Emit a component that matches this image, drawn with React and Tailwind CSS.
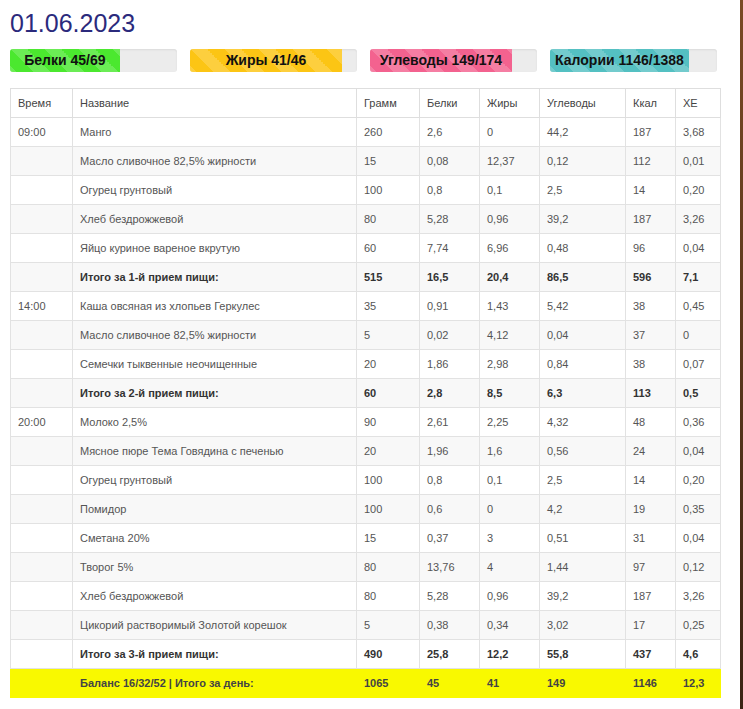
const bars = [
  { label: 'Белки 45/69', pct: 109 / 166, color: 'bg-[#4be82f]' },
  { label: 'Жиры 41/46', pct: 152 / 167, color: 'bg-[#fcc514]' },
  { label: 'Углеводы 149/174', pct: 142 / 167, color: 'bg-[#f3628f]' },
  { label: 'Калории 1146/1388', pct: 139 / 167, color: 'bg-[#54c0c2]' },
]

const rows = [
  ['09:00', 'Манго', '260', '2,6', '0', '44,2', '187', '3,68'],
  ['', 'Масло сливочное 82,5% жирности', '15', '0,08', '12,37', '0,12', '112', '0,01'],
  ['', 'Огурец грунтовый', '100', '0,8', '0,1', '2,5', '14', '0,20'],
  ['', 'Хлеб бездрожжевой', '80', '5,28', '0,96', '39,2', '187', '3,26'],
  ['', 'Яйцо куриное вареное вкрутую', '60', '7,74', '6,96', '0,48', '96', '0,04'],
  ['', 'Итого за 1-й прием пищи:', '515', '16,5', '20,4', '86,5', '596', '7,1', 'total'],
  ['14:00', 'Каша овсяная из хлопьев Геркулес', '35', '0,91', '1,43', '5,42', '38', '0,45'],
  ['', 'Масло сливочное 82,5% жирности', '5', '0,02', '4,12', '0,04', '37', '0'],
  ['', 'Семечки тыквенные неочищенные', '20', '1,86', '2,98', '0,84', '38', '0,07'],
  ['', 'Итого за 2-й прием пищи:', '60', '2,8', '8,5', '6,3', '113', '0,5', 'total'],
  ['20:00', 'Молоко 2,5%', '90', '2,61', '2,25', '4,32', '48', '0,36'],
  ['', 'Мясное пюре Тема Говядина с печенью', '20', '1,96', '1,6', '0,56', '24', '0,04'],
  ['', 'Огурец грунтовый', '100', '0,8', '0,1', '2,5', '14', '0,20'],
  ['', 'Помидор', '100', '0,6', '0', '4,2', '19', '0,35'],
  ['', 'Сметана 20%', '15', '0,37', '3', '0,51', '31', '0,04'],
  ['', 'Творог 5%', '80', '13,76', '4', '1,44', '97', '0,12'],
  ['', 'Хлеб бездрожжевой', '80', '5,28', '0,96', '39,2', '187', '3,26'],
  ['', 'Цикорий растворимый Золотой корешок', '5', '0,38', '0,34', '3,02', '17', '0,25'],
  ['', 'Итого за 3-й прием пищи:', '490', '25,8', '12,2', '55,8', '437', '4,6', 'total'],
  ['', 'Баланс 16/32/52 | Итого за день:', '1065', '45', '41', '149', '1146', '12,3', 'day'],
]

const headers = ['Время', 'Название', 'Грамм', 'Белки', 'Жиры', 'Углеводы', 'Ккал', 'XE']
const widths = ['w-[62px]', 'w-[284px]', 'w-[63px]', 'w-[60px]', 'w-[60px]', 'w-[86px]', 'w-[50px]', 'w-[45px]']

// bootstrap-like striped progress fill
const stripes =
  'bg-[linear-gradient(45deg,rgba(255,255,255,.18)_25%,transparent_25%,transparent_50%,rgba(255,255,255,.18)_50%,rgba(255,255,255,.18)_75%,transparent_75%,transparent)] bg-[length:34px_34px]'

export default function App() {
  return (
    <div className="flex min-h-[709px] w-[743px] bg-white font-['Liberation_Sans',Arial,sans-serif]">
      <div className="flex-1 pl-[10px] pt-[8px]">
        <h1 className="text-[25px] leading-[30px] text-[#2b2a7c]">01.06.2023</h1>

        <div className="mt-[11px] flex gap-[13px]">
          {bars.map((b) => (
            <div
              key={b.label}
              className="h-[23px] w-[167px] overflow-hidden rounded-[3px] bg-[#ececec] shadow-[inset_0_1px_2px_rgba(0,0,0,0.08)]"
            >
              <div
                className={`${b.color} ${stripes} flex h-full items-center justify-center whitespace-nowrap text-[14px] font-bold text-[#111]`}
                style={{ width: `${b.pct * 100}%` }}
              >
                {b.label}
              </div>
            </div>
          ))}
        </div>

        <table className="mt-[16px] w-[710px] table-fixed border-collapse text-[11px] text-[#555]">
          <thead>
            <tr>
              {headers.map((h, i) => (
                <th
                  key={h}
                  className={`${widths[i]} h-[29px] border border-[#dedede] px-[7px] text-left font-normal text-[#444]`}
                >
                  {h}
                </th>
              ))}
            </tr>
          </thead>
          <tbody>
            {rows.map((r, idx) => {
              const kind = r[8]
              const bg = kind === 'day' ? 'bg-[#f9f900]' : idx % 2 === 1 ? 'bg-[#f8f8f8]' : 'bg-white'
              const txt = kind ? 'font-bold text-[#333]' : ''
              return (
                <tr key={idx} className={bg}>
                  {r.slice(0, 8).map((c, i) => (
                    <td
                      key={i}
                      className={`h-[29px] border px-[7px] ${kind === 'day' ? 'border-[#f9f900]' : 'border-[#e2e2e2]'} ${i === 0 ? '' : txt} ${kind === 'day' ? 'text-[#444]' : ''}`}
                    >
                      {c}
                    </td>
                  ))}
                </tr>
              )
            })}
          </tbody>
        </table>
      </div>
      <div className="w-[3px] bg-[linear-gradient(180deg,#7a4a24,#3a2414)]" />
    </div>
  )
}
